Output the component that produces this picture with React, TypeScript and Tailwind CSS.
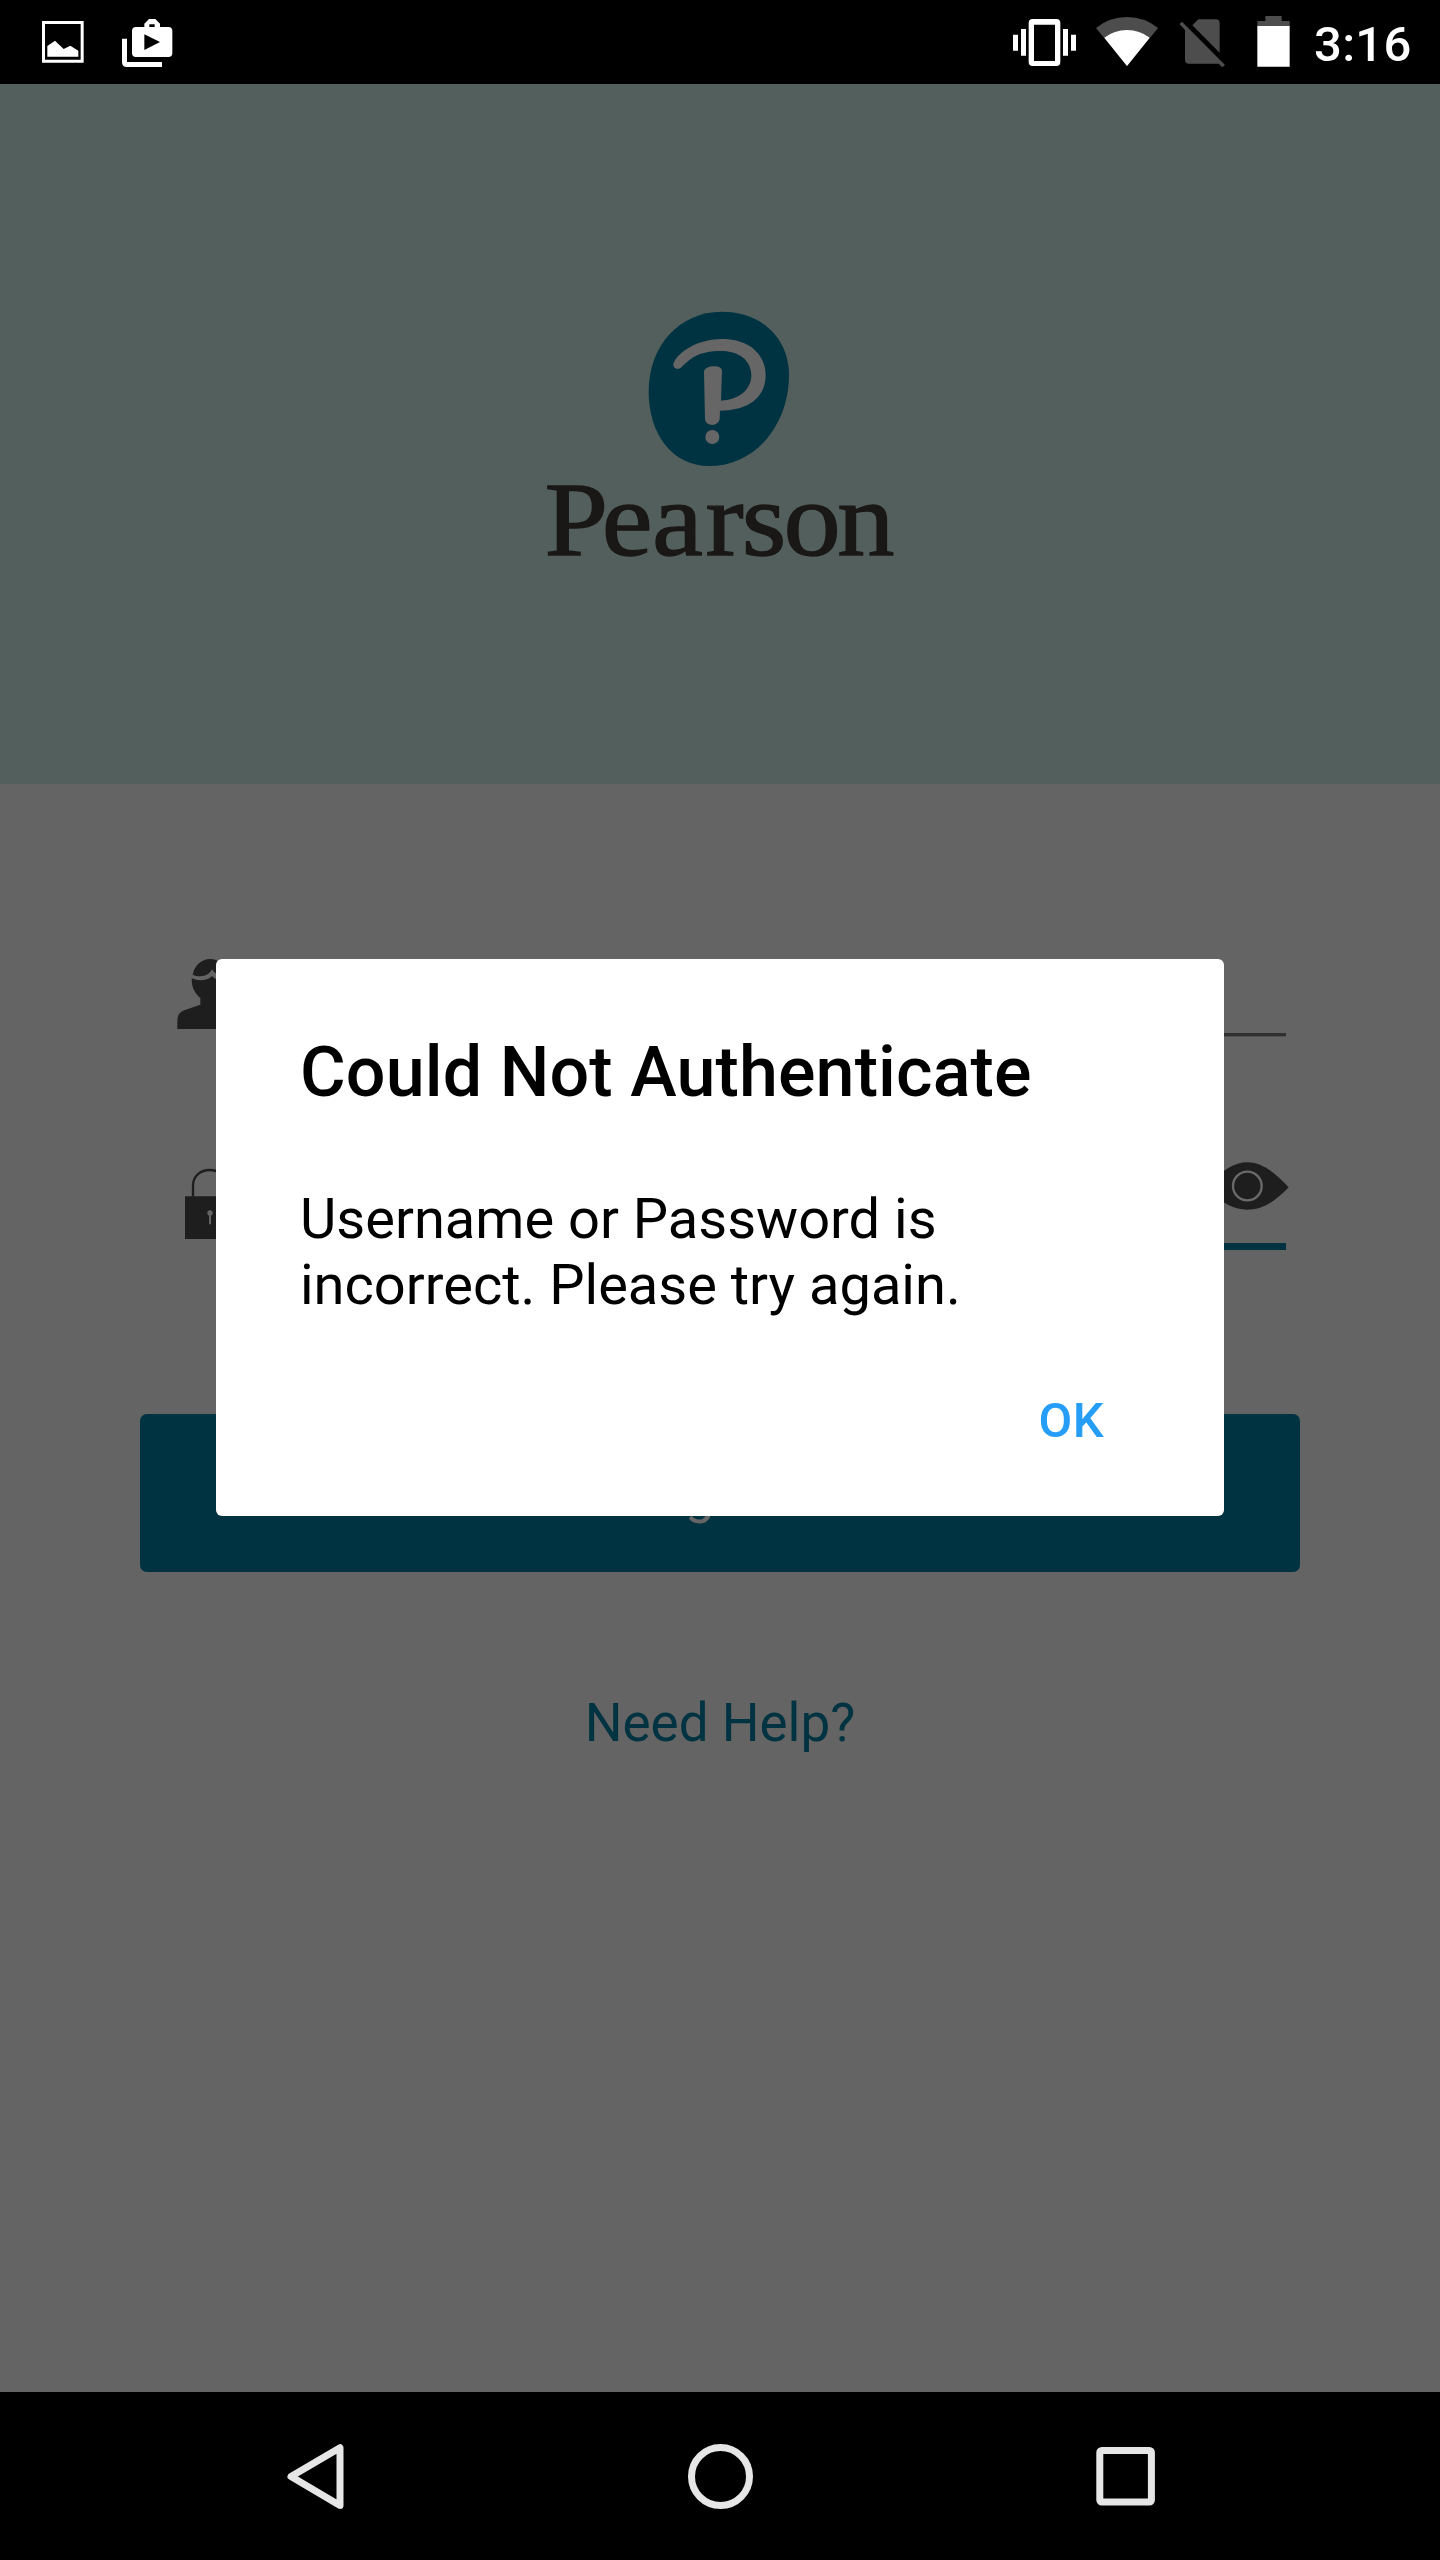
import React from "react";

function StatusBar() {
  return (
    <header className="flex h-[84px] items-start justify-between bg-black text-white">
      <div className="flex">
        <svg className="ml-[40px] mt-[14px] h-[56px] w-[48px]" viewBox="120 42 144 168" fill="white">
          <path fillRule="evenodd" d="M126 63H251V188H126ZM135 72V179H242V72Z" />
          <path d="M142 170V138L165 122L191 147L211 137L235 152V170Z" />
        </svg>
        <svg className="ml-[32px] mt-[14px] h-[56px] w-[56px]" viewBox="360 42 168 168" fill="white">
          <path
            fillRule="evenodd"
            d="M408 81H433V71L447 57H466L480 71V81H505Q517 81 517 93V159Q517 171 505 171H408Q396 171 396 159V93Q396 81 408 81ZM448 73V81H464V73ZM433 103V150L480 126Z"
          />
          <path d="M366 116H381V186H486V201H380Q366 201 366 187Z" />
        </svg>
      </div>
      <div className="flex">
        <svg className="h-[84px] w-[324px]" viewBox="0 0 972 252">
          <g fill="white">
            <path
              fillRule="evenodd"
              d="M158 57H229Q241 57 241 69V186Q241 198 229 198H158Q146 198 146 186V69Q146 57 158 57ZM162 74V183H225V74Z"
            />
            <path d="M99 104H114V152H99ZM123 87H138V167H123ZM249 87H264V167H249ZM273 104H288V152H273Z" />
          </g>
          <path d="M441 198L348 84Q388 51 441 51Q494 51 534 84Z" fill="#4d4d4d" />
          <path d="M441 198L373 113Q403 90 441 90Q479 90 509 113Z" fill="white" />
          <path
            d="M655 58H708Q719 58 719 69V158L637 76ZM606 65L735 195L727 202L716 191H627Q615 191 615 179V90L598 72Z"
            fill="#4d4d4d"
          />
          <path d="M856 48H905V63H929V78H832V63H856Z" fill="#4d4d4d" />
          <path d="M832 78H929V200H832Z" fill="white" />
        </svg>
        <span className="mt-[16px] w-[136px] pl-[10px] text-[49px] font-medium leading-[57px] tracking-[0.3px]">3:16</span>
      </div>
    </header>
  );
}

function PearsonLogo() {
  return (
    <svg className="h-[290px] w-[400px]" viewBox="0 0 1200 870">
      <path
        d="M605 65C730 65 807 150 807 255C807 400 710 528 568 528C455 528 386 430 386 305C386 165 480 65 605 65Z"
        fill="#003341"
      />
      <path
        d="M484 232C475 240 462 238 460 226C460 200 520 147 605 147C690 147 737 195 737 256C737 318 690 362 600 362L599 385C598 410 558 412 555 388L552 245C552 225 606 222 606 242L603 332C655 330 694 300 694 256C694 210 655 183 605 183C530 183 510 208 484 232Z"
        fill="#666666"
      />
      <circle cx="577" cy="441" r="21" fill="#666666" />
      <text
        transform="scale(1.08 1)"
        x="68 227 367 515 616 732 881"
        y="795"
        fontSize="318"
        fontFamily="'Liberation Serif', serif"
        fill="#1a1816"
        stroke="#1a1816"
        strokeWidth="4"
      >
        Pearson
      </text>
    </svg>
  );
}

function UserIcon() {
  return (
    <svg className="h-[72px] w-[72px]" viewBox="168 84 216 216" fill="#1e1e1e">
      <path d="M218 134C224 106 245 87 270 87C297 87 317 106 323 134C300 140 285 132 276 118C266 138 242 144 218 134Z" />
      <path d="M215 145C236 154 262 153 276 138C288 152 304 152 325 145C325 175 315 190 299 204V224L347 241C360 246 368 255 368 272V297H172V272C172 255 180 246 193 241L241 224V204C225 190 215 175 215 145Z" />
    </svg>
  );
}

function LockIcon() {
  return (
    <svg className="h-[72px] w-[72px]" viewBox="168 714 216 216">
      <path
        d="M219 800V768C219 735 245 720 269 720C295 720 319 735 319 768V800"
        fill="none"
        stroke="#1e1e1e"
        strokeWidth="7"
      />
      <path d="M195 799H343V927H195Z" fill="#1e1e1e" />
      <circle cx="270" cy="849" r="8" fill="#646464" />
      <path d="M270 850V883" stroke="#646464" strokeWidth="6" />
    </svg>
  );
}

function EyeIcon() {
  return (
    <svg className="h-[48px] w-[84px]" viewBox="166 486 252 144">
      <path
        d="M417 562C370 510 330 487 293 487C256 487 216 510 169 562C216 612 256 629 293 629C330 629 370 612 417 562Z"
        fill="#1e1e1e"
      />
      <circle cx="293" cy="558" r="43" fill="none" stroke="#6a6a6a" strokeWidth="7" />
    </svg>
  );
}

function LoginScreen() {
  return (
    <main className="flex h-[2308px] flex-col bg-[#646464]">
      <section className="flex h-[700px] justify-center bg-[#535f5c] pt-[206px]">
        <PearsonLogo />
      </section>
      <div className="flex h-[253px] items-end pl-[176px] pr-[154px]">
        <div className="mb-[7px] flex">
          <UserIcon />
        </div>
        <div className="ml-[8px] h-[4px] flex-1 border-b border-[#505050] bg-[#303030]" />
      </div>
      <div className="flex h-[213px] items-end pl-[176px] pr-[151px]">
        <div className="mb-[10px] flex">
          <LockIcon />
        </div>
        <div className="ml-[8px] flex flex-1 flex-col items-end">
          <EyeIcon />
          <div className="mr-[3px] mt-[33px] h-[7px] self-stretch bg-[#003341]" />
        </div>
      </div>
      <button className="mx-[140px] mt-[164px] h-[158px] shrink-0 rounded-[7px] bg-[#003341] pt-[4px] text-[53px] text-[#666]">
        Sign in
      </button>
      <a className="mt-[120px] self-center text-[53px] leading-[62px] text-[#003341]">Need Help?</a>
    </main>
  );
}

function AuthDialog() {
  return (
    <div className="absolute inset-x-0 top-[959px] flex justify-center">
      <div role="alertdialog" className="flex h-[557px] w-[1008px] flex-col rounded-[6px] bg-white px-[84px] pt-[72px] text-black">
        <h1 className="whitespace-nowrap text-[70px] font-medium leading-[82px] tracking-[0.12px]">
          Could Not Authenticate
        </h1>
        <p className="mt-[73px] text-[56px] leading-[66px]">
          Username or Password is
          <br />
          incorrect. Please try again.
        </p>
        <button className="mr-[36px] mt-[74px] self-end text-[49px] font-medium leading-[58px] tracking-[0.4px] text-[#269ef7]">
          OK
        </button>
      </div>
    </div>
  );
}

function NavigationBar() {
  return (
    <nav className="flex h-[168px] items-center justify-center gap-[305px] bg-black">
      <svg className="h-[100px] w-[100px]" viewBox="0 0 100 100" fill="none" stroke="#e6e6e6" strokeWidth="7" strokeLinejoin="round">
        <path d="M75 21.700V79.400L26 50.500Z" />
      </svg>
      <svg className="h-[100px] w-[100px]" viewBox="0 0 100 100" fill="none" stroke="#e6e6e6" strokeWidth="7">
        <circle cx="50.500" cy="50.500" r="29" />
      </svg>
      <svg className="h-[100px] w-[100px]" viewBox="0 0 100 100" fill="none" stroke="#e6e6e6" strokeWidth="7">
        <rect x="24.800" y="24.500" width="51.600" height="51.600" rx="2" />
      </svg>
    </nav>
  );
}

export default function App() {
  return (
    <div className="relative h-[2560px] w-[1440px] overflow-hidden font-['Roboto',sans-serif]">
      <StatusBar />
      <LoginScreen />
      <NavigationBar />
      <AuthDialog />
    </div>
  );
}
